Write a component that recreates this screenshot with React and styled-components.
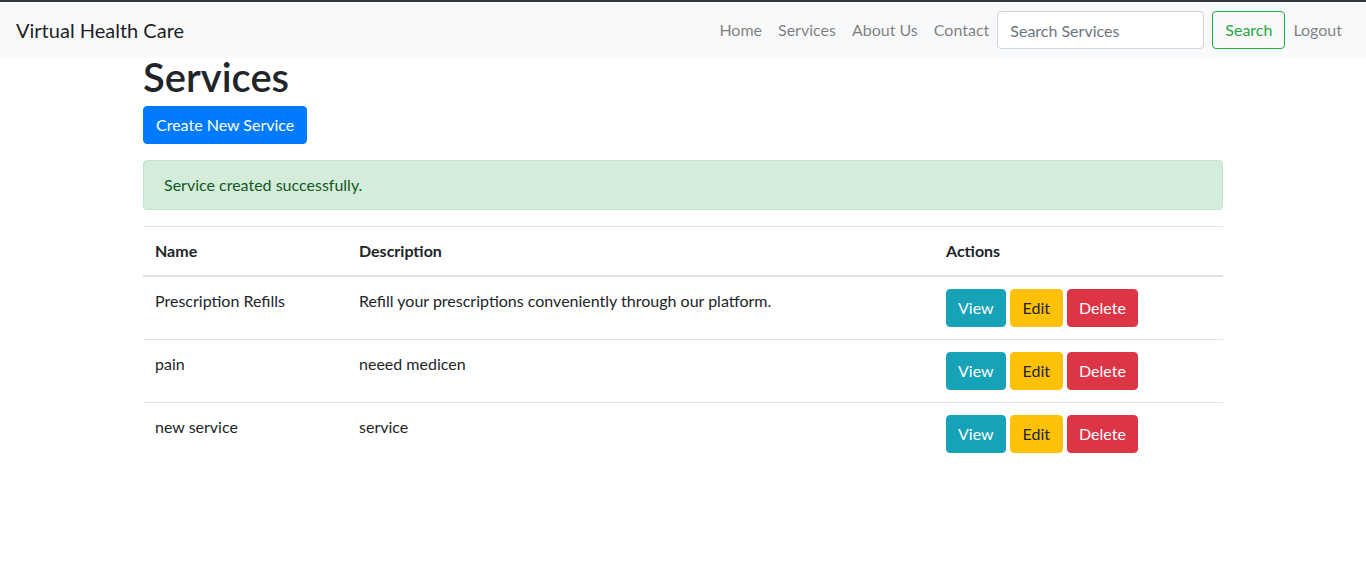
import React from "react";
import styled, { createGlobalStyle } from "styled-components";

const FONT = `Lato, "Liberation Sans", sans-serif`;

const GlobalStyle = createGlobalStyle`
  *, *::before, *::after { box-sizing: border-box; }
  body {
    margin: 0;
    font-family: ${FONT};
    font-size: 16px;
    line-height: 1.5;
    color: #212529;
    background: #fff;
  }
`;

const Navbar = styled.nav`
  display: flex;
  align-items: center;
  justify-content: space-between;
  padding: 8px 16px;
  background: #f8f9fa;
  border-top: 2px solid #343a40;
`;

const Brand = styled.a`
  font-size: 20px;
  line-height: 30px;
  padding: 5px 0;
  color: rgba(0, 0, 0, 0.9);
  text-decoration: none;
`;

const NavRight = styled.div`
  display: flex;
  align-items: center;
`;

const NavLink = styled.a`
  padding: 8px;
  color: rgba(0, 0, 0, 0.5);
  text-decoration: none;
`;

const SearchForm = styled.form`
  display: flex;
  align-items: center;
  margin: 0;
`;

const SearchInput = styled.input`
  width: 207px;
  height: 38px;
  padding: 6px 12px;
  font-family: ${FONT};
  font-size: 16px;
  color: #495057;
  border: 1px solid #ced4da;
  border-radius: 4px;
  margin-right: 8px;
  background: #fff;
  &::placeholder { color: #6c757d; }
`;

const Button = styled.button`
  display: inline-block;
  font-family: ${FONT};
  font-size: 16px;
  line-height: 1.5;
  padding: 6px ${(p) => (p.$px != null ? p.$px : 12)}px;
  border: 1px solid ${(p) => p.$bg || "transparent"};
  border-radius: 4px;
  background: ${(p) => p.$bg || "transparent"};
  color: ${(p) => p.$color || "#fff"};
  cursor: pointer;
`;

const OutlineButton = styled(Button)`
  background: transparent;
  border-color: #28a745;
  color: #28a745;
`;

const Container = styled.main`
  width: 1110px;
  margin: 0 auto;
  padding: 0 15px;
`;

const Title = styled.h1`
  font-size: 40px;
  font-weight: 600;
  line-height: 38px;
  margin: 0 0 10px;
`;

const Alert = styled.div`
  margin: 16px 0;
  padding: 12px 20px;
  border: 1px solid #c3e6cb;
  border-radius: 4px;
  background: #d4edda;
  color: #155724;
`;

const Table = styled.table`
  width: 100%;
  border-collapse: collapse;
  color: #212529;
`;

const Th = styled.th`
  text-align: left;
  font-weight: 700;
  padding: 12px;
  vertical-align: bottom;
  border-top: 1px solid #dee2e6;
  border-bottom: 2px solid #dee2e6;
  width: ${(p) => p.$w}px;
`;

const Td = styled.td`
  padding: 12px;
  vertical-align: top;
  border-top: 1px solid #dee2e6;
`;

const Actions = styled.div`
  display: flex;
  gap: 4px;
`;

const services = [
  { name: "Prescription Refills", desc: "Refill your prescriptions conveniently through our platform." },
  { name: "pain", desc: "neeed medicen" },
  { name: "new service", desc: "service" },
];

export default function App() {
  return (
    <>
      <GlobalStyle />
      <Navbar>
        <Brand href="#">Virtual Health Care</Brand>
        <NavRight>
          <NavLink href="#">Home</NavLink>
          <NavLink href="#">Services</NavLink>
          <NavLink href="#">About Us</NavLink>
          <NavLink href="#">Contact</NavLink>
          <SearchForm onSubmit={(e) => e.preventDefault()}>
            <SearchInput placeholder="Search Services" />
            <OutlineButton type="submit">Search</OutlineButton>
          </SearchForm>
          <NavLink href="#">Logout</NavLink>
        </NavRight>
      </Navbar>
      <Container>
        <Title>Services</Title>
        <Button $bg="#007bff">Create New Service</Button>
        <Alert>Service created successfully.</Alert>
        <Table>
          <thead>
            <tr>
              <Th $w={204}>Name</Th>
              <Th $w={587}>Description</Th>
              <Th $w={289}>Actions</Th>
            </tr>
          </thead>
          <tbody>
            {services.map((s) => (
              <tr key={s.name}>
                <Td>{s.name}</Td>
                <Td>{s.desc}</Td>
                <Td>
                  <Actions>
                    <Button $bg="#17a2b8" $px={11}>View</Button>
                    <Button $bg="#ffc107" $color="#212529">Edit</Button>
                    <Button $bg="#dc3545" $px={11}>Delete</Button>
                  </Actions>
                </Td>
              </tr>
            ))}
          </tbody>
        </Table>
      </Container>
    </>
  );
}
